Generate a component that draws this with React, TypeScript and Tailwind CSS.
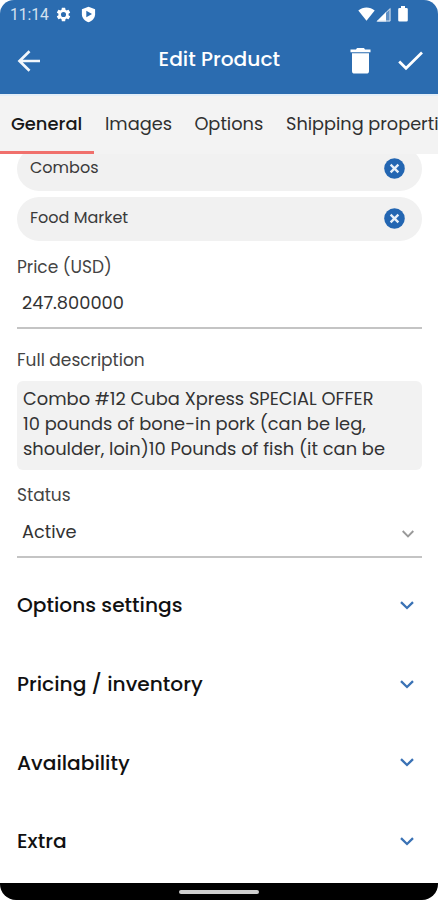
import React from "react";

type LabelProps = { label: string };

const CloseIcon = () => (
  <svg width="21" height="21" viewBox="0 0 20 20">
    <circle cx="10" cy="10" r="9.800" fill="#2366b2" />
    <path d="M6.300 6.300l7.400 7.400M13.700 6.300l-7.400 7.400" stroke="#e6eff8" strokeWidth="2.200" fill="none" />
  </svg>
);

const Chip = ({ label }: LabelProps) => (
  <div className="flex h-[44px] shrink-0 items-center justify-between rounded-full bg-[#f1f1f1] pl-[13px] pr-[17px]">
    <span className="pb-[2px] text-[16px] leading-5 text-[#3a3a3a]">{label}</span>
    <CloseIcon />
  </div>
);

const Section = ({ label }: LabelProps) => (
  <div className="flex h-[78.7px] items-center justify-between pl-[17px] pr-[24px]">
    <span className="text-[20.2px] font-medium leading-6 text-[#111]">{label}</span>
    <svg width="14" height="9" viewBox="0 0 14 9" fill="none">
      <path d="M1 1.200l6 5.800 6-5.800" stroke="#3a72b5" strokeWidth="2.300" />
    </svg>
  </div>
);

export default function App() {
  return (
    <div className="flex h-[900px] w-[438px] flex-col overflow-hidden bg-white font-['Poppins','Inter',sans-serif]">
      <header className="h-[94px] shrink-0 rounded-t-[14px] bg-[#2b6cb0] text-white">
        <div className="flex h-7 items-center justify-between pl-[10px] pr-[30px]">
          <div className="flex items-center">
            <span className="w-[39px] whitespace-nowrap pt-px font-['Roboto'] text-[15.6px] leading-7 text-[#d5e2f0]">11:14</span>
            <svg className="ml-[6px]" width="17" height="17" viewBox="0 0 24 24" fill="#fff">
              <path d="M19.14 12.94c.04-.3.06-.61.06-.94 0-.32-.02-.64-.07-.94l2.03-1.58a.49.49 0 0 0 .12-.61l-1.92-3.32a.488.488 0 0 0-.59-.22l-2.39.96c-.5-.38-1.03-.7-1.62-.94l-.36-2.54a.484.484 0 0 0-.48-.41h-3.84c-.24 0-.43.17-.47.41l-.36 2.54c-.59.24-1.13.57-1.62.94l-2.39-.96c-.22-.08-.47 0-.59.22L2.74 8.87c-.12.21-.08.47.12.61l2.03 1.58c-.05.3-.09.63-.09.94s.02.64.07.94l-2.03 1.58a.49.49 0 0 0-.12.61l1.92 3.32c.12.22.37.29.59.22l2.39-.96c.5.38 1.03.7 1.62.94l.36 2.54c.05.24.24.41.48.41h3.84c.24 0 .44-.17.47-.41l.36-2.54c.59-.24 1.13-.56 1.62-.94l2.39.96c.22.08.47 0 .59-.22l1.92-3.32c.12-.22.07-.47-.12-.61l-2.01-1.58zM12 15.6A3.6 3.6 0 1 1 12 8.4a3.6 3.6 0 0 1 0 7.2z" />
            </svg>
            <svg className="ml-[9px]" width="15" height="17" viewBox="0 0 15 17">
              <path d="M7.500.8l6.600 2.500v5c0 3.700-2.900 6.900-6.600 7.900C3.800 15.200.9 12 .9 8.300v-5z" fill="#fff" />
              <path d="M5.300 4.800l5.700 3.200-5.700 3.300z" fill="#2b6cb0" />
            </svg>
          </div>
          <div className="flex items-center">
            <svg width="17" height="14" viewBox="0 0 17 14"><path d="M.3 3.600C5-.4 12-.4 16.700 3.600L8.500 13.800z" fill="#fff" /></svg>
            <svg className="ml-[1px]" width="15" height="15" viewBox="0 0 15 15">
              <path d="M.5 14.500L14.500.5v14z" fill="#5f90c6" />
              <path d="M.5 14.500L10 5v9.500z" fill="#fff" />
              <path d="M1.500 14H14V1.700L10 5.700" fill="none" stroke="#d5e2f0" />
            </svg>
            <svg className="ml-[7px]" width="10" height="16" viewBox="0 0 10 16"><path d="M3 0h4v2h1.500Q9.800 2 9.800 3.300v11Q9.800 15.600 8.500 15.600h-7Q.2 15.600.2 14.300v-11Q.2 2 1.500 2H3z" fill="#fff" /></svg>
          </div>
        </div>
        <div className="flex h-[66px] items-center pl-[17px] pr-[15px]">
          <svg width="24" height="24" viewBox="0 0 24 24" fill="none" stroke="#f1f6fb" strokeWidth="2.700">
            <path d="M23 12H2.500M12.500 2.200L2.500 12l10 9.800" />
          </svg>
          <h1 className="mb-[5px] ml-[117.6px] w-[160px] whitespace-nowrap text-[20.2px] font-medium leading-6">Edit Product</h1>
          <svg className="ml-[31.4px]" width="21" height="26" viewBox="0 0 20 26" fill="#fff">
            <path d="M0 1.500h5.500L6.500 0h7l1 1.500H20V4.200H0z" />
            <path d="M1.500 5.200h17V23q0 2.600-2.600 2.600H4.100Q1.500 25.600 1.500 23z" />
          </svg>
          <svg className="ml-auto" width="25" height="20" viewBox="0 0 25 20" fill="none" stroke="#fff" strokeWidth="2.700">
            <path d="M1.200 10.500l6.800 6.800L24 1.500" />
          </svg>
        </div>
      </header>

      <nav className="flex h-[60px] shrink-0 items-stretch overflow-hidden whitespace-nowrap border-t-2 border-[#e3eef8] bg-[#f3f3f3] text-[17.8px] leading-[56px] text-[#303030]">
        <div className="w-[94px] shrink-0 border-b-[3px] border-[#f0706c] pl-[11px] text-[17.9px] font-medium text-[#181818]">General</div>
        <div className="w-[90px] shrink-0 pl-[11px]">Images</div>
        <div className="w-[92px] shrink-0 pl-[10.4px]">Options</div>
        <div className="shrink-0 pl-[10px] text-[17.7px]">Shipping properties</div>
      </nav>

      <main className="flex min-h-0 flex-1 flex-col overflow-hidden">
        <div className="flex flex-col gap-[6px] pl-[17px] pr-[16.5px]">
          <div className="-mt-[7.500px] h-[44px]"><Chip label="Combos" /></div>
          <Chip label="Food Market" />
        </div>
        <div className="pl-[17px] pr-[16.5px] pt-[14px]">
          <div className="text-[17px] leading-6 text-[#444]">Price (USD)</div>
          <div className="mt-[2px] h-[48px] border-b-2 border-[#c4c4c4] pl-[5px] text-[17.8px] leading-[44px] text-[#333]">247.800000</div>
        </div>
        <div className="pl-[17px] pr-[16.5px] pt-[19.500px]">
          <div className="text-[17px] leading-6 text-[#444]">Full description</div>
          <div className="mt-[9px] h-[89px] whitespace-nowrap rounded-[6px] bg-[#f2f2f2] px-[6px] pt-[5px] text-[17.85px] leading-[25px] text-[#333]">
            <div>Combo #12 Cuba Xpress SPECIAL OFFER</div>
            <div>10 pounds of bone-in pork (can be leg,</div>
            <div>shoulder, loin)10 Pounds of fish (it can be</div>
          </div>
        </div>
        <div className="pl-[17px] pr-[16.5px] pt-[13px]">
          <div className="text-[17px] leading-6 text-[#444]">Status</div>
          <div className="mt-[2px] flex h-[49px] items-center justify-between border-b-2 border-[#c4c4c4] pl-[5px] pr-[7.500px] text-[17.8px] text-[#333]">
            <span>Active</span>
            <svg className="mt-[2px]" width="12" height="8" viewBox="0 0 12 8" fill="none"><path d="M.7 1l5.300 5.300L11.300 1" stroke="#999" strokeWidth="1.900" /></svg>
          </div>
        </div>
        <div className="pt-[8px]">
          <Section label="Options settings" />
          <Section label="Pricing / inventory" />
          <Section label="Availability" />
          <Section label="Extra" />
        </div>
      </main>
      <footer className="flex h-[17px] shrink-0 justify-center rounded-b-[16px] bg-black pt-[7px]">
        <div className="h-1 w-[80px] rounded-sm bg-[#cfcfcf]" />
      </footer>
    </div>
  );
}
